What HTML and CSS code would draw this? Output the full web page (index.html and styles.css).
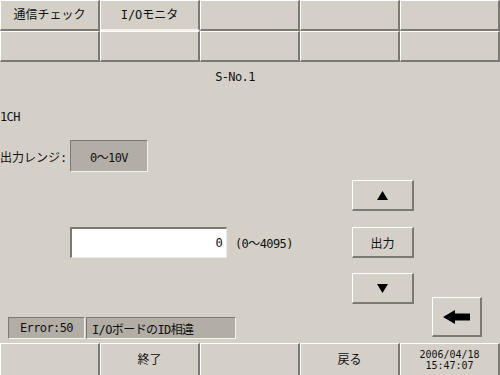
FILE: index.html
```html
<!DOCTYPE html>
<html lang="ja">
<head>
    <meta charset="UTF-8">
    <title>I/Oモニタ</title>
    <link rel="stylesheet" href="styles.css">
</head>
<body>
    <div class="tabs">
        <div class="cell">通信チェック</div>
        <div class="cell active">I/Oモニタ</div>
        <div class="cell"></div>
        <div class="cell"></div>
        <div class="cell"></div>
        <div class="cell"></div>
        <div class="cell"></div>
        <div class="cell"></div>
        <div class="cell"></div>
        <div class="cell"></div>
    </div>

    <div class="main">
        <div class="sno">S-No.1</div>
        <div class="content">
            <div class="left">
                <div class="ch">1CH</div>
                <div class="range-row">
                    <span class="range-label">出力レンジ:</span>
                    <span class="sunken range-box">0〜10V</span>
                </div>
                <div class="value-row">
                    <span class="value-input">0</span>
                    <span class="value-hint">(0〜4095)</span>
                </div>
                <div class="status">
                    <span class="sunken status-code">Error:50</span>
                    <span class="sunken status-text">I/OボードのID相違</span>
                </div>
            </div>
            <div class="controls">
                <div class="btn">
                    <svg width="11" height="9" viewBox="0 0 11 9"><polygon points="5.5,0 11,9 0,9" fill="#000"/></svg>
                </div>
                <div class="btn">出力</div>
                <div class="btn">
                    <svg width="11" height="9" viewBox="0 0 11 9"><polygon points="0,0 11,0 5.5,9" fill="#000"/></svg>
                </div>
            </div>
            <div class="back-col">
                <div class="btn back-btn">
                    <svg width="27" height="14" viewBox="0 0 27 14"><polygon points="0,7 12,0 12,3.5 27,3.5 27,10.5 12,10.5 12,14" fill="#000"/></svg>
                </div>
            </div>
        </div>
    </div>

    <div class="footer">
        <div class="cell"></div>
        <div class="cell">終了</div>
        <div class="cell"></div>
        <div class="cell">戻る</div>
        <div class="cell date">2006/04/18<br>15:47:07</div>
    </div>
</body>
</html>
```

FILE: styles.css
```css
* {
    box-sizing: border-box;
}

body {
    margin: 0;
    width: 500px;
    height: 375px;
    overflow: hidden;
    background-color: #d4d0c8;
    font-family: "DejaVu Sans Mono", "Noto Sans CJK JP", monospace;
    font-size: 12px;
    color: #111;
    display: flex;
    flex-direction: column;
}

/* latin text is narrow and tall on the panel */
.sno,
.ch,
.sunken,
.value-input,
.value-hint {
    letter-spacing: -0.6px;
}

/* top tab grid */
.tabs {
    display: grid;
    grid-template-columns: repeat(5, 100px);
    grid-auto-rows: 31px;
    height: 62px;
}

.cell {
    border-top: 1px solid #fff;
    border-left: 1px solid #fff;
    border-right: 2px solid #7c7974;
    border-bottom: 2px solid #7c7974;
    display: flex;
    align-items: center;
    justify-content: center;
    line-height: 14px;
}

.cell.active {
    border-bottom-color: #f2f1ee;
}

/* main area */
.main {
    height: 281px;
    display: flex;
    flex-direction: column;
}

.sno {
    margin-top: 8px;
    padding-right: 30px;
    text-align: center;
    line-height: 14px;
}

.content {
    display: flex;
    flex: 1;
}

.left {
    width: 352px;
    display: flex;
    flex-direction: column;
}

.ch {
    margin-top: 26px;
    line-height: 14px;
}

.range-row {
    margin-top: 16px;
    height: 32px;
    display: flex;
    align-items: center;
}

.range-label {
    width: 70px;
}

.sunken {
    background-color: #b2aea6;
    border-top: 1px solid #7c7974;
    border-left: 1px solid #7c7974;
    border-bottom: 1px solid #f4f3f0;
    border-right: 1px solid #f4f3f0;
    display: flex;
    align-items: center;
}

.range-box {
    width: 78px;
    height: 32px;
    justify-content: center;
}

.value-row {
    margin-top: 55px;
    height: 31px;
    display: flex;
    align-items: center;
}

.value-input {
    margin-left: 70px;
    width: 157px;
    height: 31px;
    background-color: #fff;
    border-top: 2px solid #7c7974;
    border-left: 2px solid #7c7974;
    border-bottom: 1px solid #ecebe8;
    border-right: 1px solid #ecebe8;
    display: flex;
    align-items: center;
    justify-content: flex-end;
    padding-right: 4px;
}

.value-hint {
    margin-left: 8px;
}

.status {
    margin-top: 59px;
    margin-left: 8px;
    height: 22px;
    display: flex;
    gap: 1px;
}

.status-code {
    width: 77px;
    justify-content: center;
}

.status-text {
    width: 150px;
    padding-left: 5px;
}

/* right side buttons */
.controls {
    width: 62px;
    padding-top: 96px;
    display: flex;
    flex-direction: column;
    gap: 15px;
}

.btn {
    height: 31px;
    border-top: 1px solid #fff;
    border-left: 1px solid #fff;
    border-right: 2px solid #7c7974;
    border-bottom: 2px solid #7c7974;
    display: flex;
    align-items: center;
    justify-content: center;
}

.controls .btn:first-child {
    margin-bottom: 1px;
}

.back-col {
    padding-left: 18px;
    padding-top: 213px;
}

.back-btn {
    width: 50px;
    height: 40px;
}

/* bottom bar */
.footer {
    display: grid;
    grid-template-columns: repeat(5, 100px);
    height: 32px;
}

.footer .cell {
    border-bottom: none;
}

.date {
    font-size: 10px;
    line-height: 11px;
    text-align: center;
}
```
